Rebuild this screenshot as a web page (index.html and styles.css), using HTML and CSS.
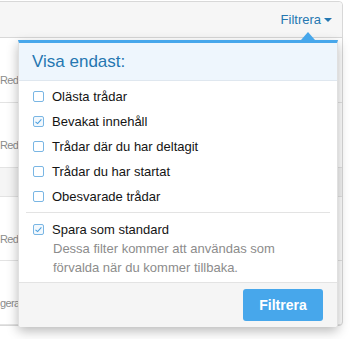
FILE: index.html
```html
<!DOCTYPE html>
<html lang="sv">
<head>
<meta charset="utf-8">
<link rel="stylesheet" href="styles.css">
</head>
<body>
<div class="panel">
  <div class="panel-head">
    <a class="filter-link">Filtrera<span class="caret"></span></a>
  </div>
  <div class="row"><span class="row-meta">Red</span></div>
  <div class="row"><span class="row-meta">Red</span></div>
  <div class="row row-sub"></div>
  <div class="row"><span class="row-meta">Red</span></div>
  <div class="row row-last"><span class="row-meta">gera</span></div>
</div>

<div class="menu">
  <div class="menu-head">Visa endast:</div>
  <ul class="menu-list">
    <li class="opt"><span class="cb"></span>Olästa trådar</li>
    <li class="opt"><span class="cb checked"><svg viewBox="0 0 11 11" width="11" height="11"><path d="M2.5 5.8 L4.6 7.6 L8.4 3.4" fill="none" stroke="#4a9fdf" stroke-width="1.1"/></svg></span>Bevakat innehåll</li>
    <li class="opt"><span class="cb"></span>Trådar där du har deltagit</li>
    <li class="opt"><span class="cb"></span>Trådar du har startat</li>
    <li class="opt"><span class="cb"></span>Obesvarade trådar</li>
  </ul>
  <div class="menu-save">
    <div class="opt"><span class="cb checked"><svg viewBox="0 0 11 11" width="11" height="11"><path d="M2.5 5.8 L4.6 7.6 L8.4 3.4" fill="none" stroke="#4a9fdf" stroke-width="1.1"/></svg></span>Spara som standard</div>
    <p class="hint">Dessa filter kommer att användas som förvalda när du kommer tillbaka.</p>
  </div>
  <div class="menu-foot">
    <button class="btn">Filtrera</button>
  </div>
</div>
</body>
</html>
```
FILE: styles.css
```css
html, body {
  margin: 0;
  padding: 0;
  background: #fff;
  font-family: "Liberation Sans", Arial, sans-serif;
  overflow: hidden;
}
.panel {
  margin: 1px 9px 0 -60px;
  border: 1px solid #d8d8d8;
  border-radius: 4px;
  background: #fff;
}
.panel-head {
  height: 35px;
  background: #f6f6f6;
  border-bottom: 1px solid #d8d8d8;
  border-radius: 4px 4px 0 0;
  display: flex;
  justify-content: flex-end;
  align-items: center;
  padding-right: 10px;
}
.filter-link {
  color: #2577b1;
  font-size: 13px;
  display: flex;
  align-items: center;
}
.caret {
  width: 0;
  height: 0;
  border-left: 4px solid transparent;
  border-right: 4px solid transparent;
  border-top: 4px solid #2577b1;
  margin-left: 3px;
  margin-top: 1px;
}
.row {
  height: 64px;
  border-bottom: 1px solid #e3e3e3;
  box-sizing: border-box;
  padding: 35px 0 0 59px;
  font-size: 11px;
  letter-spacing: -0.6px;
  line-height: 14px;
  color: #8c8c8c;
}
.row:nth-child(2) { height: 65px; }
.row:nth-child(3) { height: 65px; }
.row-sub {
  height: 29px;
  background: #f5f5f5;
  padding: 0;
}

.menu {
  position: absolute;
  left: 18px;
  top: 40px;
  width: 320px;
  box-sizing: border-box;
  background: #fff;
  border-top: 3px solid #47a7eb;
  border-left: 1px solid #e0e0e0;
  border-right: 1px solid #e0e0e0;
  box-shadow: 0 4px 12px rgba(0, 0, 0, 0.28);
  border-radius: 0 0 3px 3px;
}
.menu::before {
  content: "";
  position: absolute;
  right: 22px;
  top: -11px;
  width: 0;
  height: 0;
  border-left: 7px solid transparent;
  border-right: 7px solid transparent;
  border-bottom: 8px solid #47a7eb;
}
.menu-head {
  height: 37px;
  line-height: 37px;
  background: #eef6fd;
  border-bottom: 1px solid #dfe7ef;
  color: #2577b1;
  font-size: 17px;
  padding-left: 13px;
}
.menu-list {
  list-style: none;
  margin: 0;
  padding: 3px 0 0;
}
.opt {
  height: 25px;
  display: flex;
  align-items: center;
  padding-left: 14px;
  font-size: 13px;
  color: #141414;
}
.cb {
  width: 11px;
  height: 11px;
  box-sizing: border-box;
  border: 1px solid #79b6e4;
  border-radius: 2px;
  background: #fff;
  margin-right: 8px;
  position: relative;
  flex: none;
}
.cb svg {
  position: absolute;
  left: -1px;
  top: -1px;
}
.cb.checked {
  background: #f2f8fd;
}
.menu-save {
  margin: 3px 7px 0;
  border-top: 1px solid #e3e3e3;
  padding: 7px 0 5px;
}
.menu-save .opt {
  height: 19px;
  padding-left: 7px;
}
.hint {
  margin: 0;
  padding-left: 27px;
  font-size: 13px;
  line-height: 19px;
  color: #8c8c8c;
  width: 240px;
}
.menu-foot {
  border-top: 1px solid #e3e3e3;
  background: #f5f5f5;
  padding: 6px 14px 6px;
  display: flex;
  justify-content: flex-end;
  border-radius: 0 0 3px 3px;
}
.btn {
  width: 80px;
  height: 32px;
  border: 0;
  border-radius: 3px;
  background: #47a7eb;
  color: #fff;
  font-family: "Liberation Sans", Arial, sans-serif;
  font-weight: bold;
  font-size: 14px;
  padding: 0;
}
```
